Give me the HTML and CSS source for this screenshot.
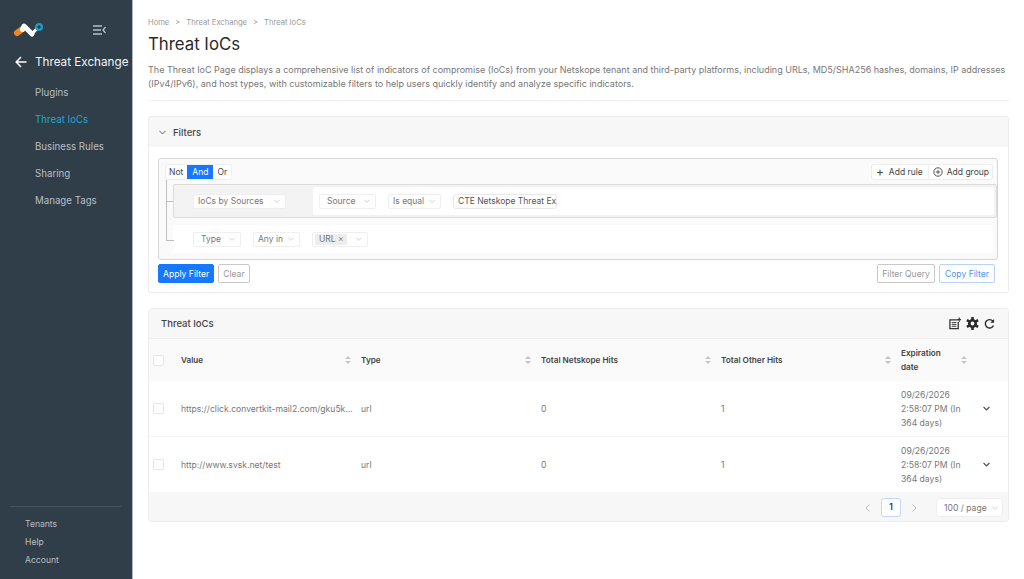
FILE: index.html
```html
<!DOCTYPE html>
<html lang="en">
<head>
  <meta charset="UTF-8">
  <title>Threat IoCs</title>
  <link rel="stylesheet" href="styles.css">
</head>
<body>

  <aside class="sidebar">
    <div class="brand">
      <svg class="logo" width="32" height="18" viewBox="0 0 32 18">
        <path d="M19 12 L23.5 7" stroke="#fff" stroke-width="3" stroke-linecap="round" fill="none"/>
        <circle cx="26" cy="5" r="2.9" fill="none" stroke="#1b9fc6" stroke-width="2.2"/>
        <path d="M4 11 L9.5 7" stroke="#f5861f" stroke-width="6" stroke-linecap="round" fill="none"/>
        <path d="M9.5 7.5 L11 4 L19 12" stroke="#fff" stroke-width="5" stroke-linecap="round" stroke-linejoin="round" fill="none"/>
      </svg>
      <svg class="collapse" width="13" height="10" viewBox="0 0 13 10">
        <path d="M0 1h9M0 5h8M0 9h9M12.5 2 L10 5 L12.5 8" stroke="#b8bec3" stroke-width="1.3" fill="none"/>
      </svg>
    </div>
    <div class="section-title">
      <svg width="12" height="12" viewBox="0 0 12 12">
        <path d="M11.5 6H1.2M6 1 L1.2 6 L6 11" stroke="#fff" stroke-width="1.5" fill="none"/>
      </svg>
      <span>Threat Exchange</span>
    </div>
    <nav class="nav">
      <a>Plugins</a>
      <a class="active">Threat IoCs</a>
      <a>Business Rules</a>
      <a>Sharing</a>
      <a>Manage Tags</a>
    </nav>
    <div class="side-foot">
      <a>Tenants</a>
      <a>Help</a>
      <a>Account</a>
    </div>
  </aside>

  <main class="content">
    <div class="crumbs"><span>Home</span><i>&gt;</i><span>Threat Exchange</span><i>&gt;</i><span>Threat IoCs</span></div>
    <h1>Threat IoCs</h1>
    <p class="intro">The Threat IoC Page displays a comprehensive list of indicators of compromise (IoCs) from your Netskope tenant and third-party platforms, including URLs, MD5/SHA256 hashes, domains, IP addresses (IPv4/IPv6), and host types, with customizable filters to help users quickly identify and analyze specific indicators.</p>

    <section class="card filters">
      <div class="card-head">
        <svg class="chev" width="7" height="5" viewBox="0 0 7 5"><path d="M.4 .8 L3.5 4 L6.6 .8" stroke="#666" fill="none"/></svg>
        <span>Filters</span>
      </div>
      <div class="filter-body">
        <div class="query">
          <div class="query-top">
            <div class="btn-group logic">
              <span>Not</span><span class="on">And</span><span>Or</span>
            </div>
            <div class="btn-group adds">
              <span><b class="plus">+</b>Add rule</span>
              <span><svg width="10" height="10" viewBox="0 0 10 10"><circle cx="5" cy="5" r="4.2" stroke="#555" fill="none"/><path d="M5 2.8v4.4M2.8 5h4.4" stroke="#555"/></svg>Add group</span>
            </div>
          </div>
          <div class="tree">
            <div class="rule-group">
              <span class="sel w-src">IoCs by Sources<svg class="dd" viewBox="0 0 9 5"><path d="M.5 .5 L4.5 4.5 L8.5 .5"/></svg></span>
              <div class="rule-inner">
                <span class="sel w-field">Source<svg class="dd" viewBox="0 0 9 5"><path d="M.5 .5 L4.5 4.5 L8.5 .5"/></svg></span>
                <span class="sel w-op">Is equal<svg class="dd" viewBox="0 0 9 5"><path d="M.5 .5 L4.5 4.5 L8.5 .5"/></svg></span>
                <span class="sel value">CTE Netskope Threat Ex</span>
              </div>
            </div>
            <div class="rule">
              <span class="sel w-type">Type<svg class="dd" viewBox="0 0 9 5"><path d="M.5 .5 L4.5 4.5 L8.5 .5"/></svg></span>
              <span class="sel w-any">Any in<svg class="dd" viewBox="0 0 9 5"><path d="M.5 .5 L4.5 4.5 L8.5 .5"/></svg></span>
              <span class="sel w-tag"><span class="tag">URL <em>×</em></span><svg class="dd" viewBox="0 0 9 5"><path d="M.5 .5 L4.5 4.5 L8.5 .5"/></svg></span>
            </div>
          </div>
        </div>
        <div class="filter-actions">
          <button class="btn primary">Apply Filter</button>
          <button class="btn">Clear</button>
          <span class="spacer"></span>
          <button class="btn">Filter Query</button>
          <button class="btn outline">Copy Filter</button>
        </div>
      </div>
    </section>

    <section class="card iocs">
      <div class="card-head table-head">
        <span>Threat IoCs</span>
        <div class="tools">
          <svg width="12" height="13" viewBox="0 0 13 13"><path d="M9 2.5H1v9.5h9V5" stroke="#333" stroke-width="1.4" fill="none"/><path d="M3 5.5h5M3 7.5h5M3 9.5h5" stroke="#333"/><path d="M11 0v4.5M8.8 2.2h4.4" stroke="#333" stroke-width="1.3"/></svg>
          <svg width="13" height="13" viewBox="0 0 13 13"><circle cx="6.5" cy="6.5" r="3.2" fill="none" stroke="#2b2b2b" stroke-width="2.6"/><path d="M6.5 0v3M6.5 10v3M.9 3.2l2.6 1.5M9.5 8.3l2.6 1.5M.9 9.8l2.6-1.5M9.5 4.7l2.6-1.5" stroke="#2b2b2b" stroke-width="2.6"/></svg>
          <svg width="11" height="12" viewBox="0 0 12 12"><path d="M10.3 7.6 A4.6 4.6 0 1 1 9.6 2.8" stroke="#2b2b2b" stroke-width="1.5" fill="none"/><path d="M11 .5v4H7z" fill="#2b2b2b"/></svg>
        </div>
      </div>
      <table>
        <colgroup>
          <col class="c-check"><col class="c-main"><col class="c-main"><col class="c-main"><col class="c-main"><col class="c-date"><col class="c-exp">
        </colgroup>
        <thead>
          <tr>
            <th><span class="check"></span></th>
            <th><div class="th">Value<span class="sort"></span></div></th>
            <th><div class="th">Type<span class="sort"></span></div></th>
            <th><div class="th">Total Netskope Hits<span class="sort"></span></div></th>
            <th><div class="th">Total Other Hits<span class="sort"></span></div></th>
            <th><div class="th">Expiration date<span class="sort"></span></div></th>
            <th></th>
          </tr>
        </thead>
        <tbody>
          <tr>
            <td><span class="check"></span></td>
            <td>https://click.convertkit-mail2.com/gku5k...</td>
            <td>url</td>
            <td>0</td>
            <td>1</td>
            <td>09/26/2026 2:58:07 PM (In 364 days)</td>
            <td><svg class="expand" width="7" height="5" viewBox="0 0 9 6"><path d="M.7 1 L4.5 4.8 L8.3 1" stroke="#555" stroke-width="1.7" fill="none"/></svg></td>
          </tr>
          <tr>
            <td><span class="check"></span></td>
            <td>http://www.svsk.net/test</td>
            <td>url</td>
            <td>0</td>
            <td>1</td>
            <td>09/26/2026 2:58:07 PM (In 364 days)</td>
            <td><svg class="expand" width="7" height="5" viewBox="0 0 9 6"><path d="M.7 1 L4.5 4.8 L8.3 1" stroke="#555" stroke-width="1.7" fill="none"/></svg></td>
          </tr>
        </tbody>
      </table>
      <div class="pager">
        <svg width="5" height="8" viewBox="0 0 5 8"><path d="M4.5 .5 L1 4 L4.5 7.5" stroke="#bbb" fill="none"/></svg>
        <span class="page">1</span>
        <svg width="5" height="8" viewBox="0 0 5 8"><path d="M.5 .5 L4 4 L.5 7.5" stroke="#bbb" fill="none"/></svg>
        <span class="per-page">100 / page<svg class="dd" viewBox="0 0 9 5"><path d="M.5 .5 L4.5 4.5 L8.5 .5"/></svg></span>
      </div>
    </section>
  </main>

</body>
</html>
```

FILE: styles.css
```css
html, body {
  height: 100%;
}

body {
  font-family: Inter, 'Liberation Sans', sans-serif;
  margin: 0;
  display: flex;
  height: 579px;
  overflow: hidden;
  background: #fff;
  color: #444;
  font-size: 9px;
}

/* sidebar */
.sidebar {
  width: 132px;
  flex: none;
  background: #2f3e49;
  border-right: 1px solid #b5b9bc;
  display: flex;
  flex-direction: column;
  color: #b9bfc4;
}

.brand {
  display: flex;
  align-items: center;
  padding: 18px 0 0 13px;
  height: 25px;
}

.collapse {
  margin-left: 48px;
  margin-top: -2px;
}

.section-title {
  display: flex;
  align-items: center;
  gap: 8px;
  margin-top: 9px;
  padding-left: 15px;
  color: #f2f4f5;
  font-size: 11.7px;
  line-height: 20px;
  white-space: nowrap;
}

.section-title svg {
  flex: none;
}

.nav {
  display: flex;
  flex-direction: column;
  padding: 7px 0 0 35px;
}

.nav a {
  font-size: 9.7px;
  line-height: 27px;
}

.nav a.active {
  color: #1ba8d0;
}

.side-foot {
  margin: auto 11px 10px 10px;
  padding: 8px 0 0 15px;
  border-top: 1px solid #44525c;
  display: flex;
  flex-direction: column;
  font-size: 8.6px;
  line-height: 18px;
}

/* page */
.content {
  flex: 1;
  min-width: 0;
  padding: 17px 15px 0 15px;
}

.crumbs {
  display: flex;
  gap: 6px;
  color: #999;
  font-size: 7.6px;
  line-height: 12px;
}

.crumbs i {
  font-style: normal;
}

h1 {
  margin: 4px 0 0;
  font-size: 16.8px;
  font-weight: 400;
  line-height: 22px;
  color: #2a2a2a;
}

.intro {
  margin: 8px 0 0;
  padding-bottom: 9px;
  border-bottom: 1px solid #f0f0f0;
  color: #777;
  font-size: 9px;
  line-height: 14px;
}

.card {
  border: 1px solid #ececec;
  border-radius: 3px;
}

.filters {
  margin-top: 15px;
  height: 177px;
  box-sizing: border-box;
}

.card-head {
  display: flex;
  align-items: center;
  background: #f7f7f7;
  height: 30px;
  padding-left: 10px;
  gap: 7px;
  color: #444;
  font-size: 9.5px;
  font-weight: 500;
}

.filter-body {
  padding: 11px 10px 0 9px;
}

.query {
  height: 102px;
  box-sizing: border-box;
  border: 1px solid #d6d6d6;
  border-radius: 3px;
  background: #fafafa;
}

.query-top {
  display: flex;
  justify-content: space-between;
  padding: 5px 4px 0 6px;
}

.btn-group {
  display: flex;
  background: #fff;
  border: 1px solid #eee;
  border-radius: 3px;
  height: 14px;
  line-height: 14px;
  font-size: 8.5px;
  color: #444;
}

.btn-group span {
  padding: 0 4px;
  display: flex;
  align-items: center;
  gap: 4px;
}

.btn-group .on {
  background: #1677ff;
  color: #fff;
  padding: 0 5px;
}

.logic span:first-child {
  padding-left: 3px;
}

.adds span:first-child {
  gap: 5px;
  padding-right: 5px;
}

.adds span + span {
  border-left: 1px solid #eee;
  padding-right: 3px;
}

.plus {
  font-weight: 400;
  font-size: 12px;
  color: #444;
}

.tree {
  position: relative;
  margin: 4px 0 0 14px;
}

.tree::before {
  content: "";
  position: absolute;
  left: -7px;
  top: -4px;
  width: 7px;
  height: 60px;
  border: 1px solid #bdbdbd;
  border-width: 0 0 1px 1px;
}

.rule-group {
  position: relative;
  display: flex;
  align-items: center;
  height: 34px;
  box-sizing: border-box;
  background: #f3f3f3;
  border: 1px solid #dcdcdc;
  border-radius: 2px;
  padding: 0 2px 0 19px;
}

.rule-group::before {
  content: "";
  position: absolute;
  left: -8px;
  top: 16px;
  width: 7px;
  border-top: 1px solid #bdbdbd;
}

.rule-inner {
  flex: 1;
  margin-left: 27px;
  height: 28px;
  background: #fff;
  border-radius: 2px;
  display: flex;
  align-items: center;
  padding-left: 6px;
  gap: 12px;
}

.rule {
  margin: 7px 4px 0 0;
  height: 28px;
  background: #fff;
  border-radius: 2px;
  display: flex;
  align-items: center;
  padding-left: 20px;
  gap: 12px;
}

.sel {
  display: flex;
  align-items: center;
  justify-content: space-between;
  box-sizing: border-box;
  height: 15px;
  background: #fff;
  border: 1px solid #efefef;
  border-radius: 2px;
  padding: 0 5px 0 4px;
  color: #777;
  font-size: 8.5px;
  white-space: nowrap;
}

.dd {
  width: 6px;
  height: 4px;
  flex: none;
  fill: none;
  stroke: #bbb;
}

.w-src { width: 93px; }
.w-field { width: 57px; padding-left: 7px; }
.w-op { width: 53px; }
.w-type { width: 48px; padding-left: 7px; }
.w-any { width: 47px; }
.w-tag { width: 56px; padding-left: 2px; }

.value {
  width: 104px;
  color: #555;
  justify-content: flex-start;
  border-color: #e8e8e8;
  border-radius: 3px;
}

.tag {
  background: #ededed;
  padding: 0 3px 0 4px;
  line-height: 11px;
}

.tag em {
  font-style: normal;
  color: #888;
}

.filter-actions {
  display: flex;
  align-items: center;
  gap: 4px;
  margin: 4px 3px 0 0;
}

.spacer {
  flex: 1;
}

.btn {
  font: inherit;
  font-size: 8.6px;
  height: 19px;
  padding: 0 4px;
  background: #fff;
  border: 1px solid #c9c9c9;
  border-radius: 2px;
  color: #999;
}

.btn.primary {
  background: #1677ff;
  border-color: #1677ff;
  color: #fff;
}

.btn.outline {
  border-color: #b8d3fb;
  color: #4f93f5;
  padding: 0 5px;
}

/* table */
.iocs {
  margin-top: 15px;
  height: 214px;
  box-sizing: border-box;
  border-radius: 4px;
  overflow: hidden;
}

.table-head {
  justify-content: space-between;
  height: 29px;
  padding: 0 13px 0 12px;
  border-bottom: 1px solid #efefef;
}

.tools {
  display: flex;
  align-items: center;
  gap: 5px;
}

table {
  width: 860px;
  margin-left: -1px;
  border-collapse: collapse;
  table-layout: fixed;
}

.c-check { width: 28px; }
.c-main { width: 180px; }
.c-date { width: 76px; }
.c-exp { width: 36px; }

th {
  background: #fafafa;
  height: 42px;
  padding: 0 5px;
  text-align: left;
  font-size: 8.2px;
  font-weight: 600;
  line-height: 14px;
  color: #444;
}

th:first-child, td:first-child {
  padding: 0 0 0 5px;
}

.th {
  display: flex;
  align-items: center;
  justify-content: space-between;
}

/* two small triangles, up and down */
.sort {
  flex: none;
  display: flex;
  flex-direction: column;
  gap: 2px;
  margin-left: 6px;
}

.sort::before, .sort::after {
  content: "";
  border-left: 3px solid transparent;
  border-right: 3px solid transparent;
}

.sort::before {
  border-bottom: 3.5px solid #c4c4c4;
}

.sort::after {
  border-top: 3.5px solid #c4c4c4;
}

td {
  height: 55px;
  padding: 0 5px;
  border-bottom: 1px solid #f4f4f4;
  color: #777;
  font-size: 8.6px;
  line-height: 14px;
}

tbody tr:last-child td {
  border-bottom: none;
}

td:nth-child(2) {
  white-space: nowrap;
  overflow: hidden;
}

.check {
  display: block;
  width: 9px;
  height: 9px;
  background: #fff;
  border: 1px solid #e6e6e6;
  border-radius: 2px;
}

.expand {
  display: block;
  margin-left: 6px;
}

.pager {
  display: flex;
  align-items: center;
  justify-content: flex-end;
  gap: 11px;
  height: 31px;
  background: #f7f7f7;
  padding-right: 5px;
  color: #777;
}

.page {
  box-sizing: border-box;
  width: 20px;
  height: 19px;
  line-height: 17px;
  text-align: center;
  background: #fff;
  border: 1px solid #c4d9f7;
  border-radius: 3px;
  color: #333;
  font-weight: 600;
  font-size: 8.5px;
}

.per-page {
  display: flex;
  align-items: center;
  gap: 5px;
  box-sizing: border-box;
  width: 67px;
  height: 19px;
  padding-left: 7px;
  margin-left: 8px;
  background: #fff;
  border: 1px solid #efefef;
  border-radius: 3px;
  font-size: 8.6px;
}
```
